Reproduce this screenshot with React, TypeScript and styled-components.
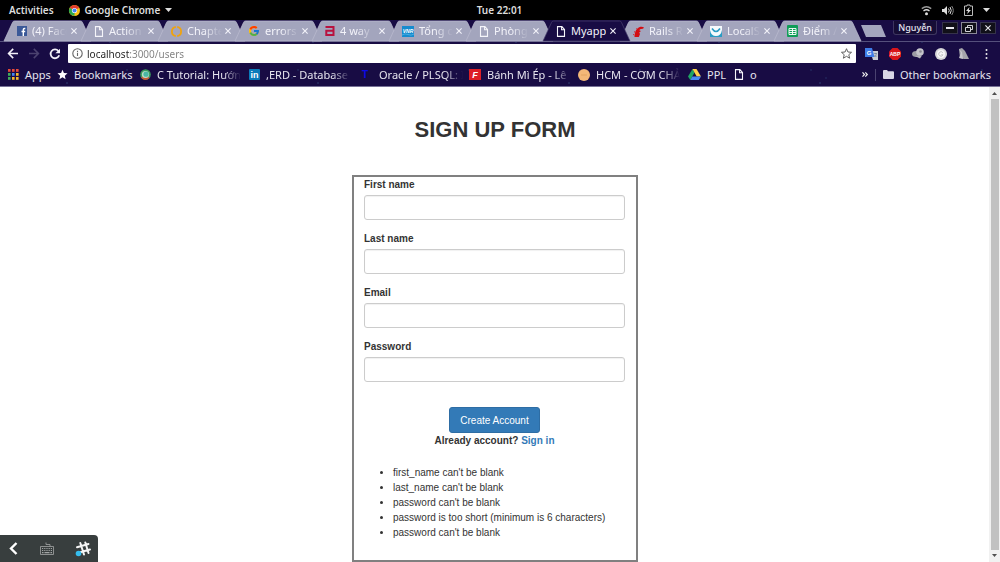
import React from "react";
import styled, { createGlobalStyle, css } from "styled-components";
import { FcGoogle } from "react-icons/fc";

const GlobalStyle = createGlobalStyle`
  *, *::before, *::after { box-sizing: border-box; }
  body { margin: 0; background: #fff; overflow: hidden; }
  button, input { font: inherit; margin: 0; }
  svg { display: block; flex: none; overflow: visible; }
`;

const uiFont = css`
  font-family: "Noto Sans", "Open Sans", sans-serif;
  font-size: 11px;
  line-height: 16px;
`;

const Desktop = styled.div`
  display: flex;
  flex-direction: column;
  height: 100vh;
`;

/* ---------- system bar ---------- */

const SystemBar = styled.header`
  ${uiFont}
  display: grid;
  grid-template-columns: 1fr auto 1fr;
  align-items: center;
  flex: none;
  height: 20px;
  padding: 0 10px 0 9px;
  background: #000;
  color: #ddd;
  font-size: 10px;
  font-weight: 600;
`;

const SystemGroup = styled.div<{ $end?: boolean; $gap: number }>`
  display: flex;
  align-items: center;
  justify-content: ${(p) => (p.$end ? "flex-end" : "flex-start")};
  gap: ${(p) => p.$gap}px;
`;

const SystemButton = styled.button`
  display: flex;
  align-items: center;
  gap: 5px;
  padding: 0;
  border: 0;
  background: none;
  color: inherit;
`;

/* ---------- browser chrome ---------- */

const Browser = styled.div`
  ${uiFont}
  flex: none;
  color: #e6e4ee;
  background-color: #180c44;
  background-image:
    radial-gradient(circle at 110px 22px, #35598a 0, transparent 1px),
    radial-gradient(circle at 67px 63px, #3a5f8c 0, transparent 1px),
    radial-gradient(circle at 25px 58px, #2c4478 0, transparent 1px),
    radial-gradient(circle at 127px 50px, #2d4c7c 0, transparent 1px);
  background-size: 203px 66px, 251px 66px, 89px 66px, 171px 66px;
  border-bottom: 1px solid #777196;
`;

const TabStrip = styled.div`
  display: flex;
  height: 22px;
  padding: 1px 4px 0;
  border-bottom: 1px solid #55507c;
`;

const TabList = styled.div`
  display: flex;
`;

const TabItem = styled.div<{ $active?: boolean }>`
  position: relative;
  z-index: ${(p) => (p.$active ? 2 : 0)};
  display: flex;
  align-items: center;
  width: 87px;
  height: 20px;
  margin-right: -10px;
  padding: 0 11px 0 13px;
  color: #f3f3fa;
`;

const TabShape = styled.svg`
  position: absolute;
  inset: 0;
  z-index: -1;
`;

const FadeText = styled.span<{ $width: number; $fade?: boolean }>`
  width: ${(p) => p.$width}px;
  overflow: hidden;
  white-space: nowrap;
  ${(p) =>
    p.$fade &&
    css`
      mask-image: linear-gradient(90deg, #000 calc(100% - 18px), transparent);
    `}
`;

const TabTitle = styled(FadeText)`
  margin-left: 5px;
`;

const CloseTab = styled.button`
  display: flex;
  align-items: center;
  justify-content: center;
  width: 12px;
  height: 12px;
  margin-left: auto;
  padding: 0;
  border: 0;
  background: none;
  color: inherit;
`;

const NewTab = styled.button`
  width: 25px;
  height: 12px;
  margin: 4px 0 0 10px;
  padding: 0;
  border: 0;
  background: #a3a5bd;
  clip-path: polygon(0 0, 80% 0, 100% 100%, 20% 100%);
`;

const WindowControls = styled.div`
  display: flex;
  gap: 3px;
  margin-left: auto;
`;

const ProfileButton = styled.button`
  height: 14px;
  margin-right: 2px;
  padding: 0 4px;
  border: 1px solid #3d355f;
  border-top: 0;
  border-radius: 0 0 3px 3px;
  background: #160d36;
  color: #e6e4ee;
  font-size: 9px;
  font-weight: 500;
  line-height: 13px;
`;

const WindowButton = styled.button<{ $lit?: boolean }>`
  display: flex;
  align-items: center;
  justify-content: center;
  width: 16px;
  height: 12px;
  margin-top: 1px;
  padding: 0;
  border: 1px solid ${(p) => (p.$lit ? "#8a8798" : "#35324a")};
  background: #111019;
  color: #e8e8ee;
`;

const Toolbar = styled.div`
  display: flex;
  align-items: center;
  height: 23px;
  padding: 0 12px 0 7px;
`;

const NavButton = styled.button<{ $dim?: boolean }>`
  display: flex;
  width: 21px;
  padding: 0;
  border: 0;
  background: none;
  color: ${(p) => (p.$dim ? "#4b426f" : "#f3f1f8")};
`;

const AddressBar = styled.div`
  display: flex;
  align-items: center;
  flex: 1;
  height: 19px;
  margin-left: -2px;
  padding: 0 4px;
  border-radius: 1px;
  background: #fff;
  color: #555;
`;

const AddressInput = styled.input`
  flex: 1;
  min-width: 0;
  height: 18px;
  margin-left: 4px;
  padding: 0;
  border: 0;
  outline: 0;
  color: transparent;
  font-size: 10px;
  background: linear-gradient(90deg, #222 43px, #808080 43px);
  background-clip: text;
`;

const Extensions = styled.div`
  display: flex;
  align-items: center;
  gap: 11px;
  margin-left: 9px;
`;

const IconButton = styled.button`
  display: flex;
  padding: 0;
  border: 0;
  background: none;
  color: inherit;
`;

const MenuButton = styled(IconButton)`
  margin-left: 5px;
`;

const BookmarkBar = styled.nav`
  display: flex;
  align-items: center;
  height: 21px;
  padding: 0 9px 2px 8px;
`;

const BookmarkLink = styled.a<{ $width?: number }>`
  display: flex;
  align-items: center;
  flex: none;
  gap: 6px;
  width: ${(p) => (p.$width ? `${p.$width}px` : "auto")};
  color: inherit;
  text-decoration: none;
  white-space: nowrap;
`;

const BookmarkEnd = styled.div`
  display: flex;
  align-items: center;
  gap: 7px;
  margin-left: auto;
`;

const Divider = styled.span`
  width: 1px;
  height: 12px;
  background: #4a4270;
`;

/* ---------- page ---------- */

const Viewport = styled.div`
  display: flex;
  flex: 1;
  min-height: 0;
  background: #fff;
`;

const Page = styled.main`
  flex: 1;
  overflow: hidden;
  padding-left: 1px;
  color: #333;
  font-family: "Liberation Sans", Arial, sans-serif;
  font-size: 10px;
  line-height: 15px;
`;

const Heading = styled.h1`
  margin: 30px 0 32px;
  font-size: 22px;
  font-weight: 700;
  line-height: 26px;
  text-align: center;
`;

const Form = styled.form`
  width: 286px;
  margin: 0 auto;
  padding: 0 11px 20px 10px;
  border: 2px solid #808080;
`;

const Field = styled.div`
  display: flex;
  flex-direction: column;
  gap: 3px;
  margin-bottom: 11px;
`;

const Label = styled.label`
  font-weight: 700;
`;

const TextInput = styled.input`
  width: 100%;
  height: 25px;
  padding: 4px 9px;
  border: 1px solid #ccc;
  border-radius: 3px;
  background: #fff;
  box-shadow: inset 0 1px 1px rgba(0, 0, 0, 0.06);
`;

const Actions = styled.div`
  display: flex;
  flex-direction: column;
  align-items: center;
  margin-top: 25px;
  font-weight: 700;
`;

const SubmitButton = styled.button`
  height: 26px;
  padding: 0 10px;
  border: 1px solid #2e6da4;
  border-radius: 3px;
  background: #337ab7;
  color: #fff;
  font-weight: 400;
`;

const SignInLink = styled.a`
  color: #337ab7;
  text-decoration: none;
`;

const ErrorList = styled.ul`
  margin: 17px 0 0;
  padding: 0 0 0 29px;
`;

const ScrollTrack = styled.div`
  display: flex;
  flex-direction: column;
  align-items: center;
  gap: 4px;
  width: 11px;
  padding: 4px 0;
  background: #f1f1f1;
  color: #505050;
`;

const ScrollThumb = styled.div`
  flex: 1;
  width: 8px;
  background: #c1c1c1;
`;

const InputTray = styled.div`
  position: fixed;
  left: 0;
  bottom: 0;
  display: flex;
  align-items: center;
  justify-content: space-between;
  width: 98px;
  height: 27px;
  padding: 0 7px 0 8px;
  border-radius: 0 4px 0 0;
  background: #383e3e;
  color: #fff;
`;

/* ---------- icons ---------- */

const BadgeSvg = styled.svg`
  font-family: "Liberation Sans", Arial, sans-serif;
  font-weight: 700;
`;

const ChromeIcon = () => (
  <svg width="11" height="11" viewBox="0 0 24 24">
    <circle cx="12" cy="12" r="12" fill="#fbc116" />
    <path d="M12 12 1.6 6A12 12 0 0 1 22.4 6Z" fill="#e33b2e" />
    <path d="M12 12 1.6 6A12 12 0 0 0 12 24Z" fill="#2da94f" />
    <circle cx="12" cy="12" r="5.6" fill="#fff" />
    <circle cx="12" cy="12" r="4.4" fill="#4285f4" />
  </svg>
);

const Caret = () => (
  <svg width="7" height="4" viewBox="0 0 7 4">
    <path d="M0 0h7L3.5 4Z" fill="currentColor" />
  </svg>
);

const WifiIcon = () => (
  <svg width="11" height="11" viewBox="0 0 11 11" fill="none" stroke="#ddd" strokeWidth="1.4">
    <path d="M.8 3.6Q5.5 0 10.2 3.6" stroke="#999" />
    <path d="M2.5 6Q5.5 3.6 8.5 6" />
    <circle cx="5.5" cy="8.7" r="1.5" fill="#ddd" stroke="none" />
  </svg>
);

const VolumeIcon = () => (
  <svg width="12" height="11" viewBox="0 0 12 11" fill="none" stroke="#ddd">
    <path d="M0 4h2l3-3v9L2 7H0Z" fill="#ddd" stroke="none" />
    <path d="M6.5 3.5q1.5 2 0 4M8 2q2.5 3.5 0 7" />
    <path d="M9.7 1q3.2 4.5 0 9" stroke="#888" />
  </svg>
);

const BatteryIcon = () => (
  <svg width="9" height="12" viewBox="0 0 9 12">
    <path d="M3 1h3v1h2.500v9.500h-8V2H3Z" fill="none" stroke="#bbb" />
    <path d="M5.500 3 2 7h2l-.8 3L7 6H4.800Z" fill="#ddd" />
  </svg>
);

const PageIcon = () => (
  <svg width="10" height="11" viewBox="0 0 10 11" fill="none" stroke="#f5f5fa" strokeWidth="1.100">
    <path d="M1.500.6h4.400l2.600 2.900v6.900h-7ZM5.600.8v3h2.700" />
  </svg>
);

const FacebookIcon = () => (
  <svg width="10" height="10" viewBox="0 0 10 10">
    <rect width="10" height="10" fill="#3b5998" />
    <path d="M8.300 2.500H7.500Q6.300 2.500 6.300 3.700V10M4.500 5.500H8.200" fill="none" stroke="#fff" strokeWidth="1.400" />
  </svg>
);

const LinkedInIcon = () => (
  <BadgeSvg width="11" height="11" viewBox="0 0 11 11">
    <rect width="11" height="11" rx="1" fill="#0a7bba" />
    <text x="5.500" y="9" fontSize="9" fill="#fff" textAnchor="middle">in</text>
  </BadgeSvg>
);

const RingIcon = () => (
  <svg width="11" height="11" viewBox="0 0 11 11" fill="none" stroke="#f0a30e" strokeWidth="1.800">
    <path d="M4.800.9C-.4 1.800-.4 9.200 4.800 10.100M6.200.9C11.400 1.800 11.400 9.200 6.200 10.100" />
  </svg>
);

const AIcon = () => (
  <svg width="10" height="10" viewBox="0 0 10 10" fill="none" stroke="#b8123f" strokeWidth="2">
    <path d="M.5 1h8v9M8.500 4.800H1.300V9H8.500" />
  </svg>
);

const VnrIcon = () => (
  <BadgeSvg width="12" height="11" viewBox="0 0 12 11">
    <rect width="12" height="11" fill="#168bce" />
    <text x="6" y="7" fontSize="5" fontStyle="italic" fill="#fff" textAnchor="middle">VNR</text>
    <path d="M0 9q3-2 6-.5T12 8" fill="none" stroke="#6bc5ee" strokeWidth=".6" />
  </BadgeSvg>
);

const RailsIcon = () => (
  <svg width="11" height="11" viewBox="0 0 11 11">
    <path d="M1.500 11C1.700 5.500 3.800 1.600 7.500.8c1.500-.3 2.600.1 3.500.8l-1 1.200C7.300 2.700 6.500 3.500 6.500 4.500l1.500.5-1.800 1.500L7 8 5.800 11Z" fill="#d40d13" />
    <path d="M.2 8.500l1 .4M1 5.500l.9.7M3.500 2.500l.6.8" stroke="#d40d13" />
  </svg>
);

const SmileIcon = () => (
  <svg width="12" height="11" viewBox="0 0 12 11">
    <rect width="12" height="11" fill="#f6fafc" />
    <path d="M0 4q1 6 6 6t6-6v7H0Z" fill="#2a9cc4" />
    <path d="M2 2.500q4 6 8 0" fill="none" stroke="#2a9cc4" strokeWidth="1.600" />
  </svg>
);

const SheetsIcon = () => (
  <svg width="11" height="12" viewBox="0 0 11 12">
    <rect width="11" height="12" rx="1" fill="#109d58" />
    <path d="M2 3.500h7v6H2ZM2 5.500h7M2 7.500h7M5.500 3.500v6" fill="none" stroke="#fff" strokeWidth=".9" />
  </svg>
);

const CloseX = () => (
  <svg width="6" height="6" viewBox="0 0 6 6" stroke="currentColor" strokeWidth="1.100">
    <path d="M.4.4l5.200 5.200M5.600.4.4 5.600" />
  </svg>
);

const AppsIcon = () => (
  <svg width="11" height="11" viewBox="0 0 11 11">
    {["#e5493a", "#e5493a", "#e5493a", "#3fae5a", "#4285f4", "#f4b92c", "#3fae5a", "#f4b92c", "#f4b92c"].map((c, i) => (
      <rect key={i} x={(i % 3) * 4} y={Math.floor(i / 3) * 4} width="2.600" height="2.800" fill={c} />
    ))}
  </svg>
);

const StarIcon = ({ outline }: { outline?: boolean }) => (
  <svg width="11" height="11" viewBox="0 0 24 24">
    <path
      d="M12 1.500l3.100 7.200 7.900.7-6 5.200 1.800 7.700L12 18.200l-6.800 4.100L7 14.600 1 9.400l7.900-.7Z"
      fill={outline ? "none" : "#fff"}
      stroke={outline ? "#555" : "none"}
      strokeWidth="2"
    />
  </svg>
);

const TutorialIcon = () => (
  <svg width="11" height="11" viewBox="0 0 11 11">
    <circle cx="5.500" cy="5.500" r="5.300" fill="#3a9b5b" />
    <path d="M5.500 5.500 1 8.500A5.300 5.300 0 0 0 9.500 9Z" fill="#c65a35" />
    <circle cx="5.500" cy="5.500" r="3.600" fill="#b9dcc9" />
    <circle cx="6" cy="5.200" r="2.600" fill="#48b6a4" />
  </svg>
);

const LetterT = () => (
  <BadgeSvg width="14" height="11" viewBox="0 0 14 11">
    <text x="6" y="9" fontSize="10" fill="#0b08e8" textAnchor="middle">T</text>
  </BadgeSvg>
);

const LetterF = () => (
  <BadgeSvg width="12" height="11" viewBox="0 0 12 11">
    <rect width="12" height="11" fill="#dd1f26" />
    <text x="6" y="9" fontSize="9" fontStyle="italic" fill="#fff" textAnchor="middle">F</text>
  </BadgeSvg>
);

const PeachIcon = () => (
  <svg width="12" height="12" viewBox="0 0 12 12">
    <circle cx="6" cy="6" r="6" fill="#f3b878" />
    <path d="M3 6h6" stroke="#e9ab69" strokeWidth="1.500" />
  </svg>
);

const DriveIcon = () => (
  <svg width="13" height="11" viewBox="0 0 13 11">
    <path d="M4.500 0 6.500 3.600 2.300 11 0 7.500Z" fill="#1fa463" />
    <path d="M4.500 0h4L13 7.500H8.700Z" fill="#ffd04b" />
    <path d="M4.300 7.500H13L10.800 11H2.300Z" fill="#4688f4" />
  </svg>
);

const FolderIcon = () => (
  <svg width="11" height="9" viewBox="0 0 11 9">
    <path d="M0 1q0-1 1-1h3l1 1.300h5q1 0 1 1V8q0 1-1 1H1Q0 9 0 8Z" fill="#d9d6e4" />
  </svg>
);

const ArrowIcon = ({ flip }: { flip?: boolean }) => (
  <svg width="12" height="11" viewBox="0 0 12 11" fill="none" stroke="currentColor" strokeWidth="1.600">
    <path d={flip ? "M1 5.500h9M5.800.9l4.600 4.600-4.600 4.600" : "M11 5.500H2M6.200.9 1.600 5.500l4.600 4.600"} />
  </svg>
);

const ReloadIcon = () => (
  <svg width="12" height="12" viewBox="0 0 12 12">
    <path d="M9.400 3A4.400 4.400 0 1 0 10.200 7.300" fill="none" stroke="currentColor" strokeWidth="1.800" />
    <path d="M11 .7v4.600H6.400Z" fill="currentColor" />
  </svg>
);

const InfoIcon = () => (
  <svg width="11" height="11" viewBox="0 0 11 11" fill="none" stroke="#666" strokeWidth="1.100">
    <circle cx="5.500" cy="5.500" r="4.700" />
    <path d="M5.500 4.800v3.200M5.500 2.700v1.200" />
  </svg>
);

const TranslateIcon = () => (
  <BadgeSvg width="13" height="12" viewBox="0 0 13 12">
    <path d="M5 3h8v9H8Z" fill="#c9ccd3" />
    <path d="M0 0h7l2.500 9H0Z" fill="#3f7de8" />
    <text x="4" y="7" fontSize="6" fill="#fff" textAnchor="middle">G</text>
    <path d="M9 5.500h3M10.500 5v1M11.500 5.500q-.5 2.500-2 3.500M9.500 7l2 2" stroke="#6e7c94" strokeWidth=".7" fill="none" />
  </BadgeSvg>
);

const AdblockIcon = () => (
  <BadgeSvg width="12" height="12" viewBox="0 0 12 12">
    <path d="M3.500 0h5L12 3.500v5L8.500 12h-5L0 8.500v-5Z" fill="#d8161b" />
    <text x="6" y="8" fontSize="5" fill="#fff" textAnchor="middle">ABP</text>
  </BadgeSvg>
);

const OrbIcon = () => (
  <svg width="12" height="11" viewBox="0 0 12 11">
    <ellipse cx="4.500" cy="6" rx="4.500" ry="3" fill="#9c9ca4" />
    <circle cx="8" cy="4" r="3.800" fill="#c4c4ca" />
    <circle cx="8.500" cy="3.500" r="1.300" fill="#8b8b93" />
    <path d="M3 8l5 2.500 2-3Z" fill="#b5b5bc" />
  </svg>
);

const GrammarIcon = () => (
  <svg width="12" height="12" viewBox="0 0 12 12">
    <circle cx="6" cy="6" r="6" fill="#d6d6d8" />
    <circle cx="6" cy="6" r="4" fill="#f7f7f7" />
    <path d="M7.800 4.700A2.200 2.200 0 1 0 8 6.800H6.200" fill="none" stroke="#c4c4c4" />
  </svg>
);

const FeatherIcon = () => (
  <svg width="11" height="11" viewBox="0 0 11 11">
    <path d="M1 1l3-1 3 3 4 8H6L2 10Z" fill="#a4a4aa" />
    <path d="M1 1l2 4-2 5 4 1-1-7Z" fill="#c6c6ca" />
  </svg>
);

const DotsIcon = () => (
  <svg width="3" height="10" viewBox="0 0 3 10" fill="#eee">
    <circle cx="1.500" cy="1" r="1" />
    <circle cx="1.500" cy="5" r="1" />
    <circle cx="1.500" cy="9" r="1" />
  </svg>
);

const ChevronsIcon = () => (
  <svg width="6" height="5" viewBox="0 0 6 5" fill="none" stroke="#eee" strokeWidth="1.200">
    <path d="M.5.4l2 2.100-2 2.100M3.300.4l2 2.100-2 2.100" />
  </svg>
);

const KeyboardIcon = () => (
  <svg width="14" height="13" viewBox="0 0 14 13" fill="none" stroke="#a3a6a6" strokeWidth=".8">
    <path d="M.5 4.500h13v8H.5ZM10 4.500V2.500H6V.5" />
    <path d="M2 6.500h10M2 8.500h10" strokeDasharray="1.200 1" strokeWidth="1.200" />
    <path d="M2 10.700h1.500M4.500 10.700h5M10.500 10.700H12" strokeWidth="1.200" />
  </svg>
);

const HashIcon = () => (
  <svg width="16" height="16" viewBox="0 0 16 16" fill="none" stroke="#f5f5f5" strokeWidth="2" strokeLinecap="round">
    <path d="M5.300 2l3.700 11.500M10.300 1.500l3.200 10.500M2 6.200l11.500-3.200M3.500 11.700l11.500-3.200" />
    <circle cx="3.500" cy="12.500" r="2.800" fill="#35bdee" stroke="none" />
  </svg>
);

/* ---------- data ---------- */

const tabs: { title: string; icon: React.ReactNode; active?: boolean }[] = [
  { title: "(4) Face", icon: <FacebookIcon /> },
  { title: "Action", icon: <PageIcon /> },
  { title: "Chapte", icon: <RingIcon /> },
  { title: "errors", icon: <FcGoogle size={12} /> },
  { title: "4 way", icon: <AIcon /> },
  { title: "Tổng c", icon: <VnrIcon /> },
  { title: "Phòng", icon: <PageIcon /> },
  { title: "Myapp", icon: <PageIcon />, active: true },
  { title: "Rails R", icon: <RailsIcon /> },
  { title: "LocalS", icon: <SmileIcon /> },
  { title: "Điểm /", icon: <SheetsIcon /> },
];

const bookmarks: { title: string; icon: React.ReactNode; width: number; fade?: boolean }[] = [
  { title: "Apps", icon: <AppsIcon />, width: 49 },
  { title: "Bookmarks", icon: <StarIcon />, width: 83 },
  { title: "C Tutorial: Hướng", icon: <TutorialIcon />, width: 109, fade: true },
  { title: ",ERD - Database D", icon: <LinkedInIcon />, width: 110, fade: true },
  { title: "Oracle / PLSQL: I", icon: <LetterT />, width: 110, fade: true },
  { title: "Bánh Mì Ép - Lê E", icon: <LetterF />, width: 109, fade: true },
  { title: "HCM - CƠM CHẢ", icon: <PeachIcon />, width: 110, fade: true },
  { title: "PPL", icon: <DriveIcon />, width: 46 },
  { title: "o", icon: <PageIcon />, width: 30 },
];

const fields = [
  { id: "first_name", label: "First name", type: "text" },
  { id: "last_name", label: "Last name", type: "text" },
  { id: "email", label: "Email", type: "email" },
  { id: "password", label: "Password", type: "password" },
];

const errors = [
  "first_name can't be blank",
  "last_name can't be blank",
  "password can't be blank",
  "password is too short (minimum is 6 characters)",
  "password can't be blank",
];

const Tab = ({ title, icon, active }: (typeof tabs)[number]) => (
  <TabItem $active={active}>
    <TabShape width="87" height="20" viewBox="0 0 87 20">
      <path
        d="M0 20 8.500 1.500Q9 0 10.500 0H76.500Q78 0 78.500 1.500L87 20Z"
        fill={active ? "#180c44" : "#a3a5bd"}
        stroke={active ? "#4a4270" : "#bcbcd0"}
        strokeWidth=".7"
      />
    </TabShape>
    {icon}
    <TabTitle $width={35} $fade={!active}>{title}</TabTitle>
    <CloseTab type="button" aria-label={`Close ${title}`}>
      <CloseX />
    </CloseTab>
  </TabItem>
);

export default function App() {
  return (
    <Desktop>
      <GlobalStyle />
      <SystemBar>
        <SystemGroup $gap={15}>
          <SystemButton type="button">Activities</SystemButton>
          <SystemButton type="button">
            <ChromeIcon />
            Google Chrome
            <Caret />
          </SystemButton>
        </SystemGroup>
        <span>Tue 22:01</span>
        <SystemGroup $end $gap={10}>
          <WifiIcon />
          <VolumeIcon />
          <BatteryIcon />
          <Caret />
        </SystemGroup>
      </SystemBar>

      <Browser>
        <TabStrip>
          <TabList>
            {tabs.map((t) => (
              <Tab key={t.title} {...t} />
            ))}
          </TabList>
          <NewTab type="button" aria-label="New tab" />
          <WindowControls>
            <ProfileButton type="button">Nguyễn</ProfileButton>
            <WindowButton type="button" aria-label="Minimize">
              <svg width="8" height="2" viewBox="0 0 8 2"><path d="M0 1h8" stroke="currentColor" strokeWidth="2" /></svg>
            </WindowButton>
            <WindowButton type="button" aria-label="Restore" $lit>
              <svg width="8" height="7" viewBox="0 0 8 7" fill="none" stroke="currentColor" strokeWidth=".9">
                <path d="M.5 2.500h5v4h-5ZM2.500 2.500v-2h5v4h-2" />
              </svg>
            </WindowButton>
            <WindowButton type="button" aria-label="Close">
              <CloseX />
            </WindowButton>
          </WindowControls>
        </TabStrip>

        <Toolbar>
          <NavButton type="button" aria-label="Back"><ArrowIcon /></NavButton>
          <NavButton type="button" aria-label="Forward" $dim><ArrowIcon flip /></NavButton>
          <NavButton type="button" aria-label="Reload"><ReloadIcon /></NavButton>
          <AddressBar>
            <InfoIcon />
            <AddressInput type="text" aria-label="Address" defaultValue="localhost:3000/users" />
            <IconButton type="button" aria-label="Bookmark this page"><StarIcon outline /></IconButton>
          </AddressBar>
          <Extensions>
            <IconButton type="button" aria-label="Translate"><TranslateIcon /></IconButton>
            <IconButton type="button" aria-label="Ad blocker"><AdblockIcon /></IconButton>
            <IconButton type="button" aria-label="Cleaner"><OrbIcon /></IconButton>
            <IconButton type="button" aria-label="Grammar"><GrammarIcon /></IconButton>
            <IconButton type="button" aria-label="Notes"><FeatherIcon /></IconButton>
            <MenuButton type="button" aria-label="Menu"><DotsIcon /></MenuButton>
          </Extensions>
        </Toolbar>

        <BookmarkBar>
          {bookmarks.map((b) => (
            <BookmarkLink key={b.title} href="#" $width={b.width}>
              {b.icon}
              {b.fade ? <FadeText $width={84} $fade>{b.title}</FadeText> : b.title}
            </BookmarkLink>
          ))}
          <BookmarkEnd>
            <IconButton type="button" aria-label="More bookmarks"><ChevronsIcon /></IconButton>
            <Divider />
            <BookmarkLink href="#">
              <FolderIcon />
              Other bookmarks
            </BookmarkLink>
          </BookmarkEnd>
        </BookmarkBar>
      </Browser>

      <Viewport>
        <Page>
          <Heading>SIGN UP FORM</Heading>
          <Form onSubmit={(e) => e.preventDefault()}>
            {fields.map((f) => (
              <Field key={f.id}>
                <Label htmlFor={f.id}>{f.label}</Label>
                <TextInput id={f.id} name={f.id} type={f.type} />
              </Field>
            ))}
            <Actions>
              <SubmitButton type="submit">Create Account</SubmitButton>
              <span>
                Already account? <SignInLink href="#">Sign in</SignInLink>
              </span>
            </Actions>
            <ErrorList>
              {errors.map((e, i) => (
                <li key={i}>{e}</li>
              ))}
            </ErrorList>
          </Form>
        </Page>
        <ScrollTrack>
          <svg width="7" height="4" viewBox="0 0 7 4"><path d="M1 4h5L3.500 1Z" fill="currentColor" /></svg>
          <ScrollThumb />
          <svg width="7" height="4" viewBox="0 0 7 4"><path d="M1 0h5L3.500 3Z" fill="currentColor" /></svg>
        </ScrollTrack>
      </Viewport>

      <InputTray>
        <IconButton type="button" aria-label="Collapse">
          <svg width="10" height="13" viewBox="0 0 10 13" fill="none" stroke="#fff" strokeWidth="2.400">
            <path d="M8.500 1 3 6.500 8.500 12" />
          </svg>
        </IconButton>
        <IconButton type="button" aria-label="Keyboard"><KeyboardIcon /></IconButton>
        <IconButton type="button" aria-label="Slack"><HashIcon /></IconButton>
      </InputTray>
    </Desktop>
  );
}
